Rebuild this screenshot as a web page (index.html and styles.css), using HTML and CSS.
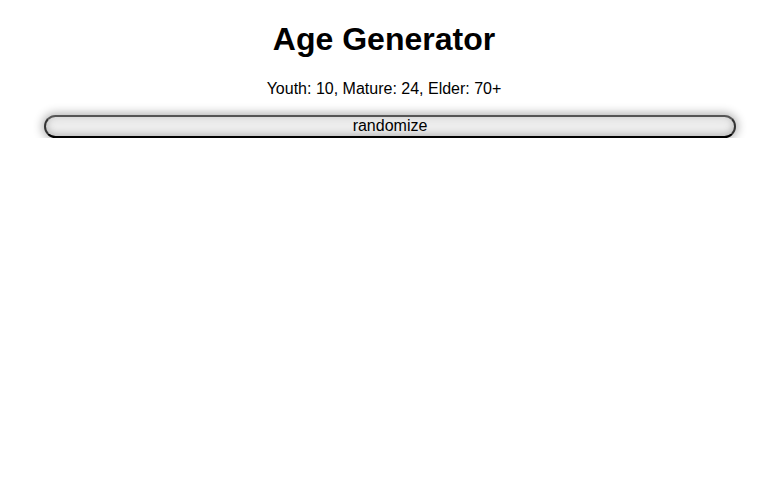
FILE: index.html
```html
<!DOCTYPE html>
<html>
<head>
<meta charset="utf-8">
<link rel="stylesheet" href="styles.css">
</head>
<body>
<h1 class="title">Age Generator</h1>
<p class="ages">Youth: 10, Mature: 24, Elder: 70+</p>
<button class="randomize">randomize</button>
</body>
</html>
```
FILE: styles.css
```css
body {
  margin: 0 8px 8px;
  font-family: "Liberation Sans", Arial, sans-serif;
  color: #000;
  background: #fff;
}
.title {
  font-size: 32px;
  font-weight: bold;
  text-align: center;
  margin: 21.44px 0;
}
.ages {
  font-size: 16px;
  text-align: center;
  margin: 16px 0 17px;
}
.randomize {
  display: block;
  box-sizing: border-box;
  width: 692px;
  height: 23px;
  margin-left: 36px;
  padding: 0;
  font-family: "Liberation Sans", Arial, sans-serif;
  font-size: 16px;
  line-height: 18px;
  color: #000;
  background: #ededed;
  border: 2px solid;
  border-color: #555 #333 #000 #333;
  border-radius: 12px;
  box-shadow: 0 0 10px 2px rgba(0,0,0,0.3), inset 0 -3px 6px rgba(0,0,0,0.12), inset 0 0 8px rgba(0,0,0,0.12);
}
```
